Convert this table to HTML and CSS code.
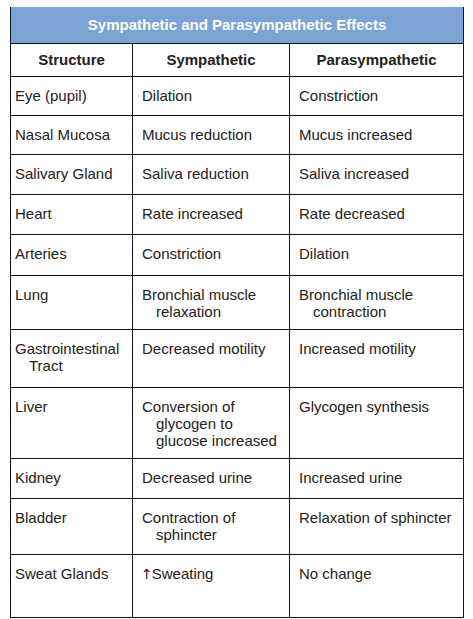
FILE: index.html
```html
<!DOCTYPE html>
<html>

<head>
	<meta charset="utf-8">
	<title>Sympathetic and Parasympathetic Effects</title>
	<link rel="stylesheet" href="styles.css">
</head>

<body>
	<table class="effects">
		<colgroup>
			<col class="col-structure">
			<col class="col-symp">
			<col class="col-para">
		</colgroup>
		<thead>
			<tr class="caption-row">
				<th colspan="3">Sympathetic and Parasympathetic Effects</th>
			</tr>
			<tr class="head-row">
				<th>Structure</th>
				<th>Sympathetic</th>
				<th>Parasympathetic</th>
			</tr>
		</thead>
		<tbody>
			<tr class="r-39">
				<td>Eye (pupil)</td>
				<td>Dilation</td>
				<td>Constriction</td>
			</tr>
			<tr class="r-39">
				<td>Nasal Mucosa</td>
				<td>Mucus reduction</td>
				<td>Mucus increased</td>
			</tr>
			<tr class="r-40">
				<td>Salivary Gland</td>
				<td>Saliva reduction</td>
				<td>Saliva increased</td>
			</tr>
			<tr class="r-40">
				<td>Heart</td>
				<td>Rate increased</td>
				<td>Rate decreased</td>
			</tr>
			<tr class="r-41">
				<td>Arteries</td>
				<td>Constriction</td>
				<td>Dilation</td>
			</tr>
			<tr class="r-54">
				<td>Lung</td>
				<td>Bronchial muscle relaxation</td>
				<td>Bronchial muscle contraction</td>
			</tr>
			<tr class="r-58">
				<td>Gastrointestinal Tract</td>
				<td>Decreased motility</td>
				<td>Increased motility</td>
			</tr>
			<tr class="r-71">
				<td>Liver</td>
				<td>Conversion of glycogen to glucose increased</td>
				<td>Glycogen synthesis</td>
			</tr>
			<tr class="r-40">
				<td>Kidney</td>
				<td>Decreased urine</td>
				<td>Increased urine</td>
			</tr>
			<tr class="r-56">
				<td>Bladder</td>
				<td>Contraction of sphincter</td>
				<td>Relaxation of sphincter</td>
			</tr>
			<tr class="r-63">
				<td>Sweat Glands</td>
				<td><span class="arrow">&uarr;</span>Sweating</td>
				<td>No change</td>
			</tr>
		</tbody>
	</table>
</body>

</html>
```

FILE: styles.css
```css
* {
	margin: 0;
	padding: 0;
	box-sizing: border-box;
}
body {
	background-color: #ffffff;
	padding: 7px 10px 0 10px;
	font-family: "Liberation Sans", Arial, sans-serif;
	color: #222222;
}
.effects {
	width: 453px;
	border-collapse: collapse;
	table-layout: fixed;
	font-size: 15px;
	line-height: 17px;
}
.col-structure {
	width: 122px;
}
.col-symp {
	width: 157px;
}
.col-para {
	width: 174px;
}
.effects th,
.effects td {
	border: 1px solid #111111;
}
.caption-row th {
	height: 36px;
	background-color: #7ba3d6;
	color: #ffffff;
	font-size: 15px;
	font-weight: bold;
	text-align: center;
	border-top: none;
}
.head-row th {
	height: 33px;
	font-size: 15px;
	font-weight: bold;
	text-align: center;
	vertical-align: middle;
}
.effects td {
	vertical-align: top;
	padding: 10px 3px 0 23px;
	text-indent: -14px;
}
.effects td:first-child {
	padding-left: 18px;
}
.arrow {
	font-family: "DejaVu Sans", sans-serif;
	font-size: 14px;
	margin-left: -1px;
	margin-right: -1px;
}
.r-39 td { height: 39px; }
.r-40 td { height: 40px; }
.r-41 td { height: 41px; }
.r-54 td { height: 54px; }
.r-56 td { height: 56px; }
.r-58 td { height: 58px; }
.r-63 td { height: 63px; }
.r-71 td { height: 71px; }
```
